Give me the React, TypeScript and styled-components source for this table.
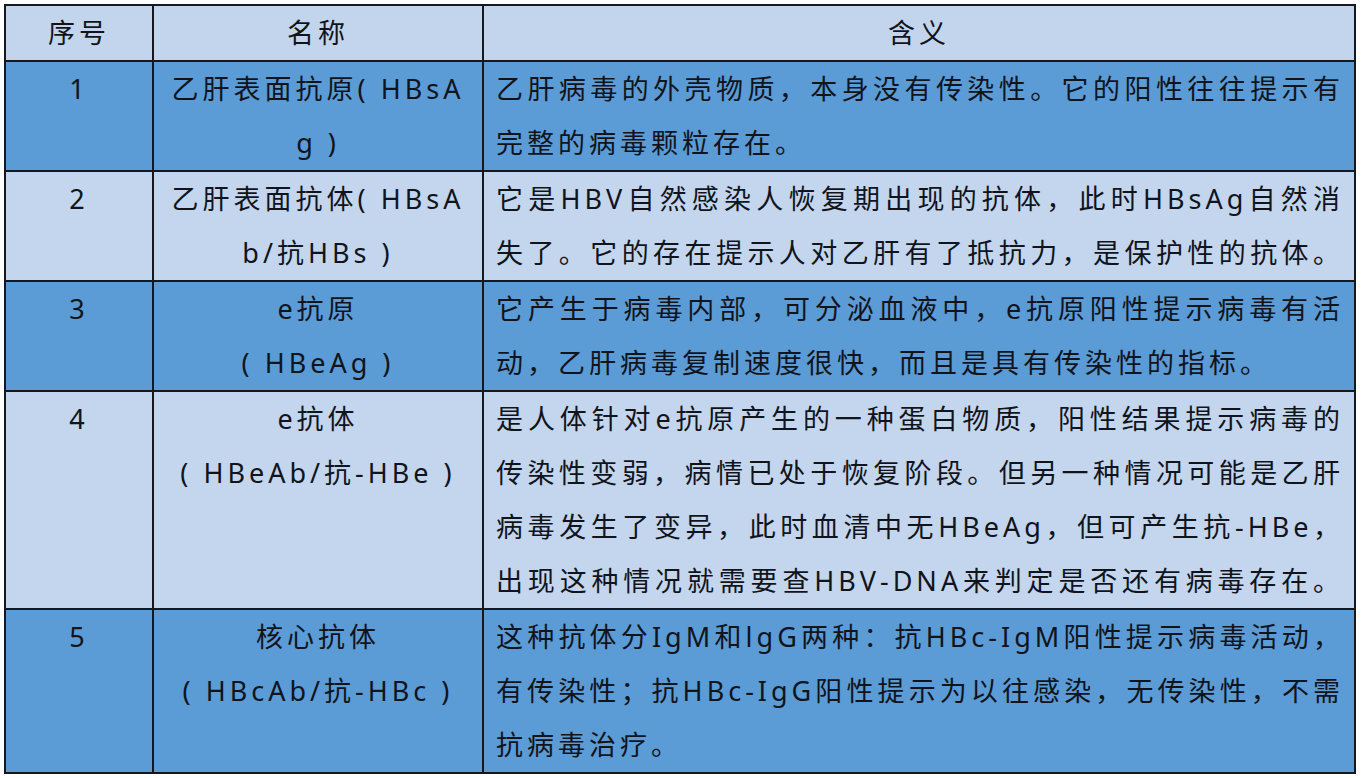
import React from "react";
import styled, { createGlobalStyle } from "styled-components";

type Row = {
  no: string;
  name: string[];
  meaning: string[];
  lastFull?: boolean;
};

const rows: Row[] = [
  {
    no: "1",
    name: ["乙肝表面抗原( HBsA", "g )"],
    meaning: [
      "乙肝病毒的外壳物质，本身没有传染性。它的阳性往往提示有",
      "完整的病毒颗粒存在。",
    ],
  },
  {
    no: "2",
    name: ["乙肝表面抗体( HBsA", "b/抗HBs )"],
    meaning: [
      "它是HBV自然感染人恢复期出现的抗体，此时HBsAg自然消",
      "失了。它的存在提示人对乙肝有了抵抗力，是保护性的抗体。",
    ],
    lastFull: true,
  },
  {
    no: "3",
    name: ["e抗原", "( HBeAg )"],
    meaning: [
      "它产生于病毒内部，可分泌血液中，e抗原阳性提示病毒有活",
      "动，乙肝病毒复制速度很快，而且是具有传染性的指标。",
    ],
  },
  {
    no: "4",
    name: ["e抗体", "( HBeAb/抗-HBe )"],
    meaning: [
      "是人体针对e抗原产生的一种蛋白物质，阳性结果提示病毒的",
      "传染性变弱，病情已处于恢复阶段。但另一种情况可能是乙肝",
      "病毒发生了变异，此时血清中无HBeAg，但可产生抗-HBe，",
      "出现这种情况就需要查HBV-DNA来判定是否还有病毒存在。",
    ],
    lastFull: true,
  },
  {
    no: "5",
    name: ["核心抗体", "( HBcAb/抗-HBc )"],
    meaning: [
      "这种抗体分IgM和lgG两种：抗HBc-IgM阳性提示病毒活动，",
      "有传染性；抗HBc-IgG阳性提示为以往感染，无传染性，不需",
      "抗病毒治疗。",
    ],
  },
];

const GlobalStyle = createGlobalStyle`
  html, body {
    margin: 0;
    padding: 0;
    background: #ffffff;
  }
  body {
    font-family: "Noto Sans", "Noto Sans CJK SC", sans-serif;
    color: #11141b;
  }
`;

const Page = styled.div`
  padding: 4px 0 0 4px;
`;

const Table = styled.table`
  width: 1352px;
  border-collapse: collapse;
  table-layout: fixed;
  border: 2px solid #15181e;
  font-size: 27px;
  letter-spacing: 4px;
  line-height: 54px;
`;

const HeadRow = styled.tr`
  background: #c3d5ed;
`;

const BodyRow = styled.tr<{ $dark: boolean }>`
  background: ${(p) => (p.$dark ? "#5b9bd6" : "#c3d6ee")};
`;

const HeadCell = styled.th<{ $w?: number }>`
  width: ${(p) => (p.$w ? `${p.$w}px` : "auto")};
  border: 2px solid #15181e;
  padding: 0;
  font-weight: 400;
  text-align: center;
  height: 54px;
`;

const Cell = styled.td`
  border: 2px solid #15181e;
  padding: 0;
  vertical-align: top;
  text-align: center;
`;

const MeaningCell = styled.td`
  border: 2px solid #15181e;
  padding: 0 10px 0 12px;
  vertical-align: top;
`;

const Line = styled.div<{ $justify: boolean }>`
  text-align: ${(p) => (p.$justify ? "justify" : "left")};
  text-align-last: ${(p) => (p.$justify ? "justify" : "left")};
  white-space: nowrap;
`;

const App: React.FC = () => {
  return (
    <>
      <GlobalStyle />
      <Page>
        <Table>
          <thead>
            <HeadRow>
              <HeadCell $w={146}>序号</HeadCell>
              <HeadCell $w={328}>名称</HeadCell>
              <HeadCell>含义</HeadCell>
            </HeadRow>
          </thead>
          <tbody>
            {rows.map((row, i) => (
              <BodyRow key={row.no} $dark={i % 2 === 0}>
                <Cell>{row.no}</Cell>
                <Cell>
                  {row.name.map((n) => (
                    <div key={n}>{n}</div>
                  ))}
                </Cell>
                <MeaningCell>
                  {row.meaning.map((m, j) => (
                    <Line
                      key={m}
                      $justify={j < row.meaning.length - 1 || !!row.lastFull}
                    >
                      {m}
                    </Line>
                  ))}
                </MeaningCell>
              </BodyRow>
            ))}
          </tbody>
        </Table>
      </Page>
    </>
  );
};

export default App;
